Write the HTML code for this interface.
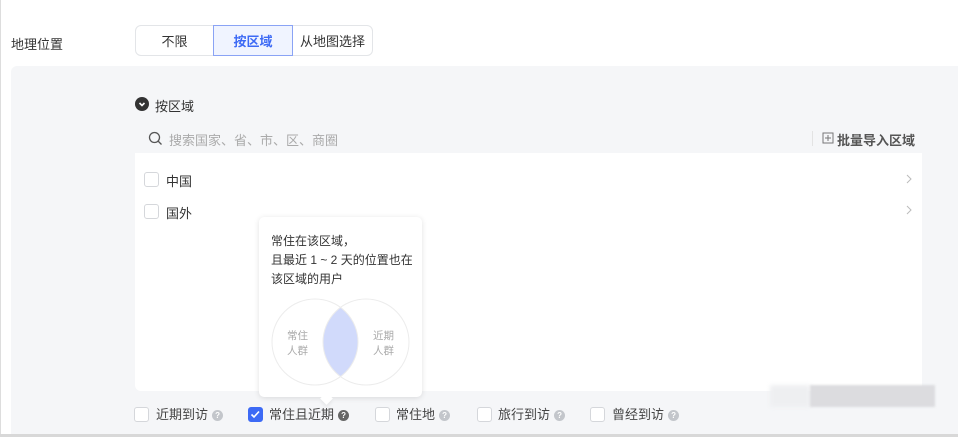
<!DOCTYPE html>
<html><head><meta charset="utf-8"><style>
*{box-sizing:border-box;margin:0;padding:0}
body{width:958px;height:437px;background:#fff;font-family:"Liberation Sans","Noto Sans CJK SC",sans-serif;font-size:13px;color:#333;position:relative;overflow:hidden}
.abs{position:absolute}
.seg{position:absolute;top:25px;height:31px;border:1px solid #e3e5e8;display:flex;align-items:center;justify-content:center;font-size:13px;color:#333}
.cb{position:absolute;width:15px;height:15px;border:1px solid #d5d7db;border-radius:3px;background:#fff}
.lb{position:absolute;top:406px;display:flex;align-items:center;line-height:18px;color:#444}
.q{display:inline-block;width:11px;height:11px;border-radius:50%;background:#c3c6cb;color:#fff;font-size:8px;line-height:11px;text-align:center;margin-left:4px;font-weight:bold}
</style></head><body>
<div class="abs" style="left:0;top:0;width:1px;height:437px;background:#ddd"></div>
<div class="abs" style="left:11px;top:34px;font-size:13px">地理位置</div>
<div class="seg" style="left:135px;width:79px;border-radius:6px 0 0 6px">不限</div>
<div class="seg" style="left:213px;width:80px;border-color:#8aa3f5;background:#f0f4ff;color:#3d6af5;font-weight:bold;z-index:1">按区域</div>
<div class="seg" style="left:292px;width:81px;border-radius:0 6px 6px 0">从地图选择</div>

<div class="abs" style="left:11px;top:66px;width:947px;height:369px;background:#f5f6f8;border-radius:6px 0 0 0"></div>
<div class="abs" style="left:0;top:434px;width:958px;height:3px;background:#d8d8d8"></div>

<div class="abs" style="left:135px;top:97px;width:14px;height:14px;border-radius:50%;background:#333"></div>
<svg class="abs" style="left:135px;top:97px" width="14" height="14"><path d="M4.5 6l2.5 2.5 2.5-2.5" stroke="#fff" stroke-width="1.6" fill="none"/></svg>
<div class="abs" style="left:155px;top:96px;font-size:13px">按区域</div>

<svg class="abs" style="left:148px;top:131px" width="15" height="15"><circle cx="6.5" cy="6.5" r="5" stroke="#555" stroke-width="1.3" fill="none"/><path d="M10 10l3.5 3.5" stroke="#555" stroke-width="1.3"/></svg>
<div class="abs" style="left:169px;top:130px;color:#aaa">搜索国家、省、市、区、商圈</div>
<div class="abs" style="left:812px;top:131px;width:1px;height:15px;background:#e3e3e3"></div>
<svg class="abs" style="left:822px;top:132px" width="12" height="12"><rect x="1" y="1" width="10" height="10" stroke="#777" fill="none"/><path d="M6 3v6M3 6h6" stroke="#777"/></svg>
<div class="abs" style="left:837px;top:130px;font-weight:bold;color:#555">批量导入区域</div>

<div class="abs" style="left:135px;top:153px;width:787px;height:238px;background:#fff;border-radius:0 0 6px 6px"></div>
<div class="cb" style="left:144px;top:172px"></div><div class="abs" style="left:166px;top:171px">中国</div>
<div class="cb" style="left:144px;top:204px"></div><div class="abs" style="left:166px;top:203px">国外</div>
<svg class="abs" style="left:905px;top:173px" width="8" height="12"><path d="M2 2l4 4-4 4" stroke="#bbb" fill="none"/></svg>
<svg class="abs" style="left:905px;top:204px" width="8" height="12"><path d="M2 2l4 4-4 4" stroke="#bbb" fill="none"/></svg>

<div class="abs" style="left:259px;top:217px;width:163px;height:180px;background:#fff;border-radius:5px;box-shadow:0 1px 6px rgba(0,0,0,.12)"></div>
<div class="abs" style="left:322px;top:394px;width:9px;height:9px;background:#fff;transform:rotate(45deg);box-shadow:2px 2px 3px rgba(0,0,0,.06)"></div>
<div class="abs" style="left:271px;top:232px;font-size:12px;line-height:19px;color:#333">常住在该区域，<br>且最近 1 ~ 2 天的位置也在<br>该区域的用户</div>
<svg class="abs" style="left:259px;top:290px" width="163" height="100">
<defs><clipPath id="c"><circle cx="56" cy="52" r="43"/></clipPath></defs>
<circle cx="107" cy="52" r="43" fill="#d1dafb" clip-path="url(#c)"/>
<circle cx="56" cy="52" r="43" stroke="#ececec" fill="none"/>
<circle cx="107" cy="52" r="43" stroke="#ececec" fill="none"/>
<text x="28" y="49" font-size="10.5" fill="#aaa" font-family="Noto Sans CJK SC">常住</text>
<text x="28" y="64" font-size="10.5" fill="#aaa" font-family="Noto Sans CJK SC">人群</text>
<text x="114" y="49" font-size="10.5" fill="#aaa" font-family="Noto Sans CJK SC">近期</text>
<text x="114" y="64" font-size="10.5" fill="#aaa" font-family="Noto Sans CJK SC">人群</text>
</svg>

<div class="cb" style="left:134px;top:407px"></div><div class="lb" style="left:156px">近期到访<span class="q">?</span></div>
<div class="cb" style="left:248px;top:407px;background:#3d6af5;border-color:#3d6af5"></div>
<svg class="abs" style="left:248px;top:407px" width="15" height="15"><path d="M3.5 7.5l2.5 2.5 5-5.5" stroke="#fff" stroke-width="1.6" fill="none"/></svg>
<div class="lb" style="left:269px">常住且近期<span class="q" style="background:#666">?</span></div>
<div class="cb" style="left:375px;top:407px"></div><div class="lb" style="left:396px">常住地<span class="q">?</span></div>
<div class="cb" style="left:477px;top:407px"></div><div class="lb" style="left:498px">旅行到访<span class="q">?</span></div>
<div class="cb" style="left:590px;top:407px"></div><div class="lb" style="left:612px">曾经到访<span class="q">?</span></div>

<div class="abs" style="left:770px;top:385px;width:40px;height:22px;background:#eeeff1;filter:blur(2px)"></div>
<div class="abs" style="left:810px;top:385px;width:125px;height:22px;background:#dcdcdf;filter:blur(1px)"></div>
</body></html>
